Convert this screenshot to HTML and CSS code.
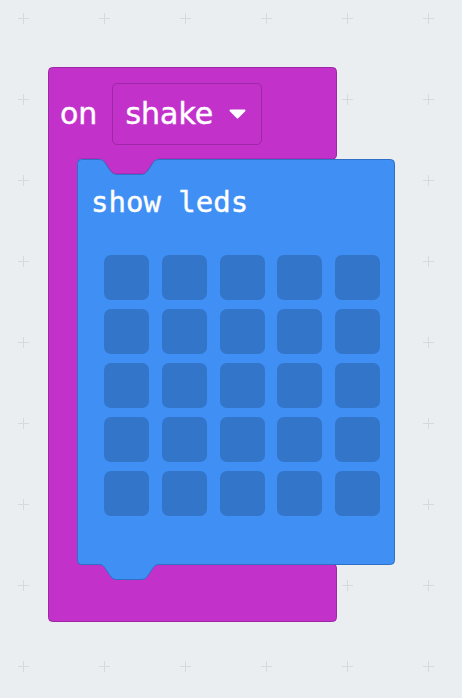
FILE: index.html
```html
<!DOCTYPE html>
<html lang="en">
<head>
    <meta charset="UTF-8">
    <meta name="viewport" content="width=device-width, initial-scale=1.0">
    <title>on shake</title>
    <link rel="stylesheet" href="styles.css">
</head>
<body>

<div class="workspace">
    <svg class="grid" width="462" height="698">
        <defs>
            <pattern id="cross" x="0" y="0" width="81" height="81" patternUnits="userSpaceOnUse">
                <path d="M18 18.5 H29 M23.5 13 V24" stroke="#d6dadd" stroke-width="1" fill="none"/>
            </pattern>
        </defs>
        <rect width="462" height="698" fill="url(#cross)"/>
    </svg>

    <!-- event block: on shake -->
    <div class="event-block">
        <svg class="event-shape" width="289" height="555">
            <path d="M0.5 4.5 A4 4 0 0 1 4.5 0.5 H284.5 A4 4 0 0 1 288.5 4.5 V88 A4 4 0 0 1 284.5 92 H111 c-4 0 -5 2 -7 5 l-4 6 c-2 3 -4 4 -7 4 h-24 c-3 0 -5 -1 -7 -4 l-4 -6 c-2 -3 -3 -5 -7 -5 H31 V497 H284.5 A4 4 0 0 1 288.5 501 V550.5 A4 4 0 0 1 284.5 554.5 H4.5 A4 4 0 0 1 0.5 550.5 Z"/>
        </svg>
        <div class="event-head">
            <span class="label">on</span>
            <div class="dropdown">
                <span class="label">shake</span>
                <svg class="caret" width="17" height="10" viewBox="0 0 17 10">
                    <path d="M1.5 1.5 H15.5 L8.5 8.5 Z"/>
                </svg>
            </div>
        </div>
        <div class="event-body">
            <div class="leds-block">
                <svg class="leds-shape" width="318" height="421">
                    <path d="M0.5 4.5 A4 4 0 0 1 4.5 0.5 H22 c4 0 5 2 7 5 l4 6 c2 3 4 4 7 4 h24 c3 0 5 -1 7 -4 l4 -6 c2 -3 3 -5 7 -5 H313.5 A4 4 0 0 1 317.5 4.5 V401.5 A4 4 0 0 1 313.5 405.5 H82 c-4 0 -5 2 -7 5 l-4 6 c-2 3 -4 4 -7 4 h-24 c-3 0 -5 -1 -7 -4 l-4 -6 c-2 -3 -3 -5 -7 -5 H4.5 A4 4 0 0 1 0.5 401.5 Z"/>
                </svg>
                <div class="leds-label">show leds</div>
                <div class="led-grid">
                    <div class="led"></div><div class="led"></div><div class="led"></div><div class="led"></div><div class="led"></div>
                    <div class="led"></div><div class="led"></div><div class="led"></div><div class="led"></div><div class="led"></div>
                    <div class="led"></div><div class="led"></div><div class="led"></div><div class="led"></div><div class="led"></div>
                    <div class="led"></div><div class="led"></div><div class="led"></div><div class="led"></div><div class="led"></div>
                    <div class="led"></div><div class="led"></div><div class="led"></div><div class="led"></div><div class="led"></div>
                </div>
            </div>
        </div>
        <div class="event-foot"></div>
    </div>
</div>

</body>
</html>
```

FILE: styles.css
```css
body {
    margin: 0;
    overflow: hidden;
    background-color: #ebeef0;
}
.workspace {
    position: relative;
    width: 462px;
    height: 698px;
    overflow: hidden;
}
.grid {
    position: absolute;
    top: 0;
    left: 0;
}
.event-block {
    position: absolute;
    left: 48px;
    top: 67px;
    width: 289px;
}
.event-shape {
    position: absolute;
    top: 0;
    left: 0;
}
.event-shape path {
    fill: #c232cb;
    stroke: #9d27a5;
    stroke-width: 1;
}
.event-head {
    position: relative;
    height: 92px;
    display: flex;
    align-items: center;
    gap: 15px;
    padding: 1px 0 0 12px;
    box-sizing: border-box;
}
.label {
    font-family: "DejaVu Sans", sans-serif;
    font-size: 30px;
    line-height: 60px;
    color: #fff;
    -webkit-text-stroke: 0.4px #fff;
}
.dropdown {
    display: flex;
    align-items: center;
    height: 62px;
    box-sizing: border-box;
    padding: 0 15px 0 12px;
    border: 1px solid #9d27a5;
    border-radius: 5px;
}
.caret {
    margin-left: 16px;
}
.caret path {
    fill: #fff;
    stroke: #fff;
    stroke-width: 2;
    stroke-linejoin: round;
}
.event-body {
    position: relative;
    padding-left: 29px;
}
.leds-block {
    position: relative;
    width: 318px;
    box-sizing: border-box;
    padding: 26px 0 49px 14px;
}
.leds-shape {
    position: absolute;
    top: 0;
    left: 0;
    overflow: visible;
}
.leds-shape path {
    fill: #3f8ff4;
    stroke: #2f70c6;
    stroke-width: 1;
}
.leds-label {
    position: relative;
    font-family: "DejaVu Sans Mono", monospace;
    font-size: 29px;
    line-height: 34px;
    color: #fff;
    -webkit-text-stroke: 0.4px #fff;
}
.led-grid {
    position: relative;
    margin: 36px 0 0 13px;
    display: grid;
    grid-template-columns: repeat(5, 45px);
    grid-auto-rows: 45px;
    column-gap: 12.75px;
    row-gap: 9px;
}
.led {
    background-color: #3275c9;
    border-radius: 7px;
}
.event-foot {
    height: 57px;
}
```
